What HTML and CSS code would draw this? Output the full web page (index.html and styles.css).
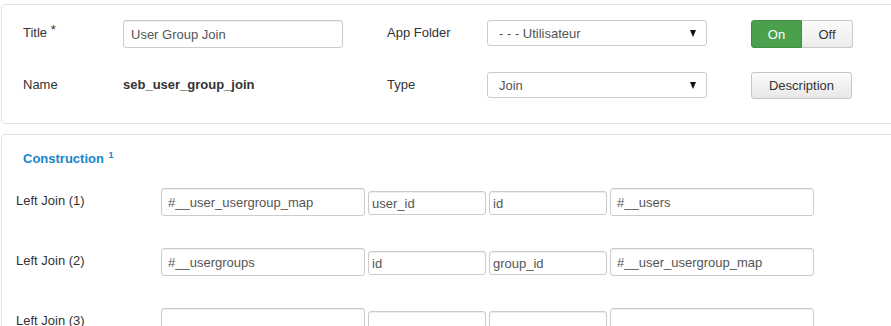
FILE: index.html
```html
<!DOCTYPE html>
<html>
<head>
<meta charset="utf-8">
<link rel="stylesheet" href="styles.css">
</head>
<body>
<div class="page">
  <div class="panel top-panel">
    <div class="form-grid">
      <div class="label">Title <span class="star">*</span></div>
      <input class="field" type="text" value="User Group Join">
      <div class="label label2">App Folder</div>
      <div class="select"><span>- - - Utilisateur</span><span class="caret"></span></div>
      <div class="toggle"><span class="tbtn on">On</span><span class="tbtn off">Off</span></div>

      <div class="label">Name</div>
      <div class="value">seb_user_group_join</div>
      <div class="label label2">Type</div>
      <div class="select"><span>Join</span><span class="caret"></span></div>
      <div class="btn">Description</div>
    </div>
  </div>

  <div class="panel second-panel">
    <div class="heading">Construction <sup>1</sup></div>
    <div class="join-row">
      <div class="join-label">Left Join (1)</div>
      <input class="big" type="text" value="#__user_usergroup_map">
      <input class="small" type="text" value="user_id">
      <input class="small" type="text" value="id">
      <input class="big" type="text" value="#__users">
    </div>
    <div class="join-row">
      <div class="join-label">Left Join (2)</div>
      <input class="big" type="text" value="#__usergroups">
      <input class="small" type="text" value="id">
      <input class="small" type="text" value="group_id">
      <input class="big" type="text" value="#__user_usergroup_map">
    </div>
    <div class="join-row">
      <div class="join-label">Left Join (3)</div>
      <input class="big" type="text" value="">
      <input class="small" type="text" value="">
      <input class="small" type="text" value="">
      <input class="big" type="text" value="">
    </div>
  </div>
</div>
</body>
</html>
```
FILE: styles.css
```css
html, body {
  margin: 0;
  padding: 0;
  background: #fff;
  overflow: hidden;
}
body {
  font-family: "Liberation Sans", Arial, sans-serif;
  font-size: 13px;
  color: #333;
}
.page {
  box-sizing: border-box;
  height: 326px;
  overflow: hidden;
  padding: 4px 0 0 1px;
  margin-right: -4px;
}
.panel {
  border: 1px solid #e3e3e3;
  border-radius: 4px;
  background: #fff;
}
.top-panel {
  padding: 15px 21px 23px 21px;
}
.form-grid {
  display: grid;
  grid-template-columns: 100px 220px 144px 220px 146px;
  grid-template-rows: 28px 28px;
  row-gap: 24px;
  align-items: start;
}
.form-grid .label {
  padding-top: 5px;
  line-height: 15px;
}
.form-grid .label2 {
  margin-left: 44px;
}
.form-grid .toggle,
.form-grid .btn {
  margin-left: 44px;
}
.star {
  position: relative;
  top: -3px;
}
.field {
  box-sizing: border-box;
  width: 220px;
  height: 28px;
  margin: 0;
  border: 1px solid #ccc;
  border-radius: 3px;
  box-shadow: inset 0 1px 1px rgba(0,0,0,0.075);
  padding: 4px 7px;
  font-family: inherit;
  font-size: 13px;
  color: #555;
  outline: none;
}
.value {
  font-weight: bold;
  padding-top: 5px;
  line-height: 15px;
}
.select {
  box-sizing: border-box;
  width: 220px;
  height: 26px;
  border: 1px solid #ccc;
  border-radius: 3px;
  display: flex;
  align-items: center;
  justify-content: space-between;
  padding: 0 10px 0 11px;
  color: #555;
}
.caret {
  width: 0;
  height: 0;
  border-left: 3.5px solid transparent;
  border-right: 3.5px solid transparent;
  border-top: 7px solid #111;
  margin-top: 1px;
}
.toggle {
  display: flex;
  width: 102px;
  height: 28px;
}
.tbtn {
  box-sizing: border-box;
  width: 51px;
  height: 28px;
  display: flex;
  align-items: center;
  justify-content: center;
}
.tbtn.on {
  background: #4aa04d;
  border: 1px solid #3f8f42;
  border-radius: 3px 0 0 3px;
  color: #fff;
}
.tbtn.off {
  background: linear-gradient(#fbfbfb, #ececec);
  border: 1px solid #c8c8c8;
  border-left: none;
  border-radius: 0 3px 3px 0;
  color: #333;
}
.btn {
  box-sizing: border-box;
  width: 101px;
  height: 27px;
  display: flex;
  align-items: center;
  justify-content: center;
  background: linear-gradient(#fbfbfb, #e8e8e8);
  border: 1px solid #c4c4c4;
  border-radius: 3px;
  color: #333;
}
.second-panel {
  margin-top: 10px;
  padding: 15px 14px 0 14px;
  height: 240px;
}
.heading {
  color: #1a84c9;
  font-weight: bold;
  line-height: 18px;
  padding-left: 7px;
  margin-bottom: 20px;
}
.heading sup {
  font-size: 9px;
  vertical-align: top;
  position: relative;
  top: -4px;
  margin-left: 1px;
}
.join-row {
  display: flex;
  align-items: flex-start;
  gap: 3px;
  height: 60px;
}
.join-label {
  width: 142px;
  padding-top: 5px;
  line-height: 15px;
}
.join-row input {
  box-sizing: border-box;
  margin: 0;
  border: 1px solid #ccc;
  border-radius: 3px;
  font-family: inherit;
  font-size: 13px;
  color: #555;
  outline: none;
  box-shadow: inset 0 1px 1px rgba(0,0,0,0.075);
}
.join-row .big {
  width: 204px;
  height: 28px;
  padding: 4px 6px;
}
.join-row .small {
  width: 118px;
  height: 24px;
  margin-top: 3px;
  padding: 2px 3px;
}
```
